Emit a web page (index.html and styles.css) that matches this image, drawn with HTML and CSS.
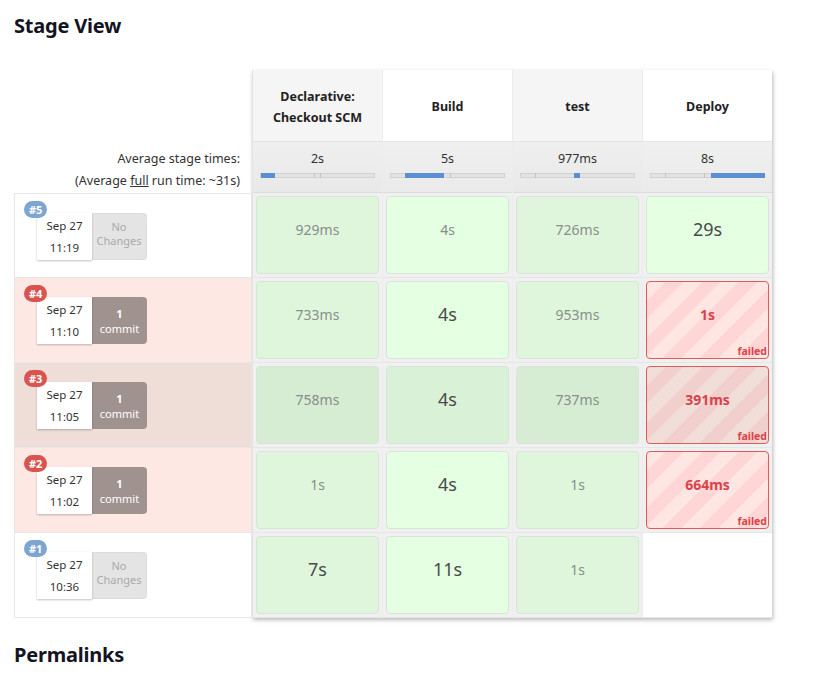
FILE: index.html
```html
<!DOCTYPE html>
<html>
<head>
<meta charset="utf-8">
<link rel="stylesheet" href="styles.css">
</head>
<body>
<h2 class="title">Stage View</h2>
<div class="stage-view">
  <div class="builds">
    <div class="builds-head"></div>
    <div class="builds-avg">
      <div>Average stage times:</div>
      <div>(Average <u>full</u> run time: ~31s)</div>
    </div>
    <div class="build-row">
      <span class="badge badge-ok">#5</span>
      <div class="build-info">
        <div class="date"><span>Sep 27</span><span>11:19</span></div>
        <div class="changes none"><span>No</span><span>Changes</span></div>
      </div>
    </div>
    <div class="build-row failed-row">
      <span class="badge badge-fail">#4</span>
      <div class="build-info">
        <div class="date"><span>Sep 27</span><span>11:10</span></div>
        <div class="changes commit"><b>1</b><span>commit</span></div>
      </div>
    </div>
    <div class="build-row failed-row hover-row">
      <span class="badge badge-fail">#3</span>
      <div class="build-info">
        <div class="date"><span>Sep 27</span><span>11:05</span></div>
        <div class="changes commit"><b>1</b><span>commit</span></div>
      </div>
    </div>
    <div class="build-row failed-row">
      <span class="badge badge-fail">#2</span>
      <div class="build-info">
        <div class="date"><span>Sep 27</span><span>11:02</span></div>
        <div class="changes commit"><b>1</b><span>commit</span></div>
      </div>
    </div>
    <div class="build-row">
      <span class="badge badge-ok">#1</span>
      <div class="build-info">
        <div class="date"><span>Sep 27</span><span>10:36</span></div>
        <div class="changes none"><span>No</span><span>Changes</span></div>
      </div>
    </div>
  </div>

  <div class="stages">
    <div class="col col-odd">
      <div class="head">Declarative:<br>Checkout SCM</div>
      <div class="avg"><span>2s</span>
        <div class="bar"><i class="tick" style="left:53px"></i><i class="tick" style="left:59px"></i><i class="fill" style="left:0;width:14px"></i></div>
      </div>
      <div class="slot"><div class="cell">929ms</div></div>
      <div class="slot"><div class="cell">733ms</div></div>
      <div class="slot hover"><div class="cell">758ms</div></div>
      <div class="slot"><div class="cell">1s</div></div>
      <div class="slot"><div class="cell big">7s</div></div>
    </div>
    <div class="col col-even">
      <div class="head">Build</div>
      <div class="avg"><span>5s</span>
        <div class="bar"><i class="tick" style="left:59px"></i><i class="fill" style="left:14px;width:39px"></i></div>
      </div>
      <div class="slot"><div class="cell">4s</div></div>
      <div class="slot"><div class="cell big">4s</div></div>
      <div class="slot hover"><div class="cell big">4s</div></div>
      <div class="slot"><div class="cell big">4s</div></div>
      <div class="slot"><div class="cell big">11s</div></div>
    </div>
    <div class="col col-odd">
      <div class="head">test</div>
      <div class="avg"><span>977ms</span>
        <div class="bar"><i class="tick" style="left:14px"></i><i class="fill" style="left:53px;width:6px"></i></div>
      </div>
      <div class="slot"><div class="cell">726ms</div></div>
      <div class="slot"><div class="cell">953ms</div></div>
      <div class="slot hover"><div class="cell">737ms</div></div>
      <div class="slot"><div class="cell">1s</div></div>
      <div class="slot"><div class="cell">1s</div></div>
    </div>
    <div class="col col-even">
      <div class="head">Deploy</div>
      <div class="avg"><span>8s</span>
        <div class="bar"><i class="tick" style="left:14px"></i><i class="tick" style="left:53px"></i><i class="fill" style="left:60px;width:54px"></i></div>
      </div>
      <div class="slot"><div class="cell big">29s</div></div>
      <div class="slot"><div class="cell fail"><b>1s</b><em>failed</em></div></div>
      <div class="slot hover"><div class="cell fail"><b>391ms</b><em>failed</em></div></div>
      <div class="slot"><div class="cell fail"><b>664ms</b><em>failed</em></div></div>
      <div class="slot empty"></div>
    </div>
  </div>
</div>
<h2 class="title permalinks">Permalinks</h2>
</body>
</html>
```

FILE: styles.css
```css
* { box-sizing: border-box; }
body {
  margin: 0;
  padding: 0 14px;
  background: #fff;
  font-family: "Noto Sans", "Open Sans", "DejaVu Sans", sans-serif;
  color: #333;
}
.title {
  margin: 0;
  padding-top: 12px;
  height: 70px;
  font-size: 20px;
  font-weight: 700;
  color: #14141f;
  letter-spacing: -0.2px;
}
.permalinks {
  padding-top: 23px;
}
.stage-view {
  display: flex;
  align-items: flex-start;
}
.builds {
  width: 238px;
  display: flex;
  flex-direction: column;
}
.builds-head { height: 72px; }
.builds-avg {
  height: 51px;
  padding: 6px 12px 0 0;
  text-align: right;
  font-size: 12.5px;
  line-height: 22px;
  color: #333;
}
.build-row {
  position: relative;
  height: 85px;
  border: 1px solid #e6e6e6;
  border-top: none;
  padding: 19px 0 0 22px;
  background: #fff;
}
.builds-avg + .build-row { border-top: 1px solid #e6e6e6; }
.failed-row { background: #fde8e3; }
.hover-row { background: #efddd8; }
.badge {
  position: absolute;
  left: 9px;
  top: 7px;
  height: 17px;
  padding: 0 5px;
  border-radius: 9px;
  font-size: 11px;
  font-weight: 700;
  line-height: 17px;
  color: #fff;
  z-index: 2;
}
.badge-ok { background: #7ea5d0; }
.badge-fail { background: #d9534f; }
.build-info {
  display: flex;
  width: 110px;
  height: 47px;
}
.date {
  width: 55px;
  background: #fff;
  box-shadow: 0 1px 2px rgba(0,0,0,0.25);
  display: flex;
  flex-direction: column;
  align-items: center;
  justify-content: center;
  gap: 4px;
  font-size: 11.5px;
  line-height: 18px;
  color: #333;
  position: relative;
  z-index: 1;
}
.changes {
  width: 55px;
  border-radius: 0 4px 4px 0;
  display: flex;
  flex-direction: column;
  align-items: center;
  justify-content: center;
  font-size: 11px;
  line-height: 15px;
}
.changes.none {
  background: #e4e4e4;
  color: #aaa;
  border: 1px solid #dcdcdc;
  border-left: none;
  line-height: 14px;
  padding-bottom: 6px;
}
.changes.commit {
  background: #a0938f;
  color: #fff;
}
.changes.commit b { font-size: 11px; }

.stages {
  display: flex;
  box-shadow: 1px 2px 4px rgba(0,0,0,0.28);
  background: #fff;
}
.col {
  width: 130px;
  display: flex;
  flex-direction: column;
  border-left: 1px solid #ececec;
}
.col:first-child { border-left: 1px solid #e2e2e2; }
.head {
  height: 72px;
  display: flex;
  align-items: center;
  justify-content: center;
  text-align: center;
  font-size: 12.5px;
  font-weight: 700;
  line-height: 21px;
  padding-top: 2px;
  color: #222;
  border-bottom: 1px solid #e4e4e4;
}
.col-odd .head { background: #f5f5f5; }
.col-even .head { background: #fff; }
.avg {
  height: 51px;
  background: linear-gradient(#efefef, #e9e9e9);
  text-align: center;
  font-size: 12.5px;
  line-height: 20px;
  padding-top: 7px;
  color: #333;
  border-bottom: 1px solid #dcdcdc;
}
.col-even .avg { background: linear-gradient(#f0f0f0, #eaeaea); }
.bar {
  position: relative;
  margin: 4px auto 0;
  width: 115px;
  height: 5px;
  background: #e2e2e2;
  border: 1px solid #d2d2d2;
}
.bar .tick {
  position: absolute;
  top: -1px;
  width: 1px;
  height: 5px;
  background: #c4c4c4;
}
.bar .fill {
  position: absolute;
  top: -1px;
  height: 5px;
  background: #5b8fd4;
}
.slot {
  height: 85px;
  padding: 3px;
  background: #f0f0f0;
  border-bottom: 1px solid #e6e6e6;
}
.slot.empty { background: #fff; }
.cell {
  height: 100%;
  border: 1px solid #d8e4d8;
  border-radius: 4px;
  display: flex;
  align-items: center;
  justify-content: center;
  padding-bottom: 12px;
  font-size: 14px;
  color: #888e88;
  position: relative;
}
.col-odd .cell { background: #dff6dd; }
.col-even .cell { background: #e4ffe2; }
.hover .cell { background: #d6edd4; }
.col-even .hover .cell { background: #d9f2d7; }
.cell.big {
  font-size: 18px;
  color: #4a4a4a;
}
.col .cell.fail {
  border: 1px solid #e05a5a;
  background: repeating-linear-gradient(135deg, #ffe6e3 0 13px, #ffd6d6 13px 26px);
  color: #d9434a;
}
.col .hover .cell.fail {
  background: repeating-linear-gradient(135deg, #f2ded9 0 13px, #f0cfcd 13px 26px);
}
.cell.fail b { font-size: 14px; font-weight: 700; }
.cell.fail em {
  position: absolute;
  right: 1px;
  bottom: 0;
  font-style: normal;
  font-weight: 700;
  font-size: 10.5px;
  line-height: 14px;
}
```
